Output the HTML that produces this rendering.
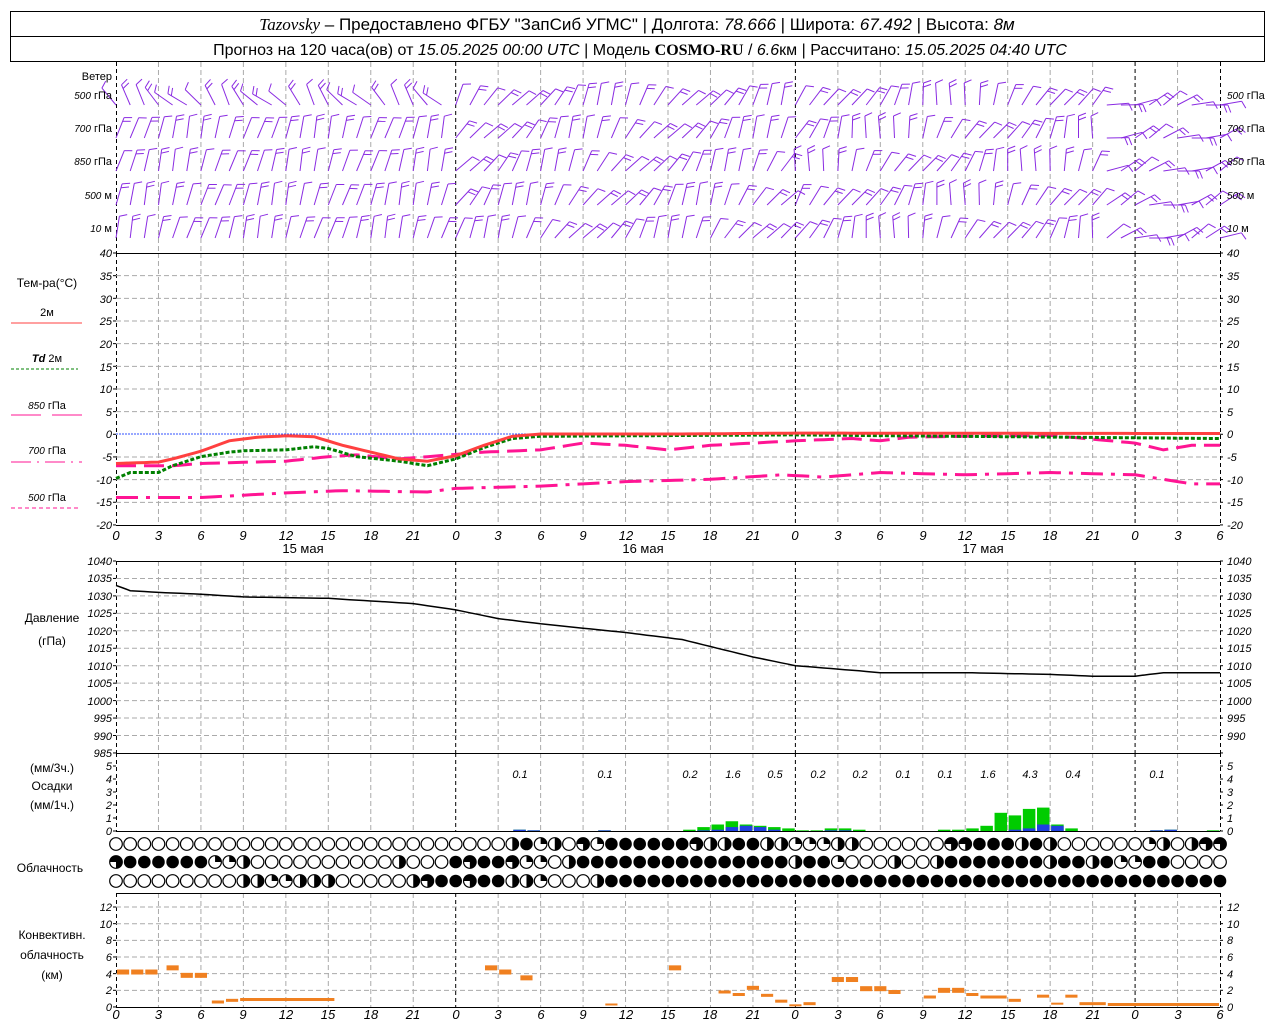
<!DOCTYPE html>
<html><head><meta charset="utf-8"><style>
body{margin:0;background:#fff}
svg{display:block}
text{font-family:"Liberation Sans",sans-serif;font-size:11px;fill:#000}
.n{font-style:italic;font-size:10px}
.l text{text-anchor:end}
.r text{text-anchor:start}
.ax text{text-anchor:middle;font-style:italic;font-size:13px}
.c{text-anchor:middle}
</style></head><body>
<svg id="s" width="1280" height="1024" viewBox="0 0 1280 1024" xmlns="http://www.w3.org/2000/svg">
<rect x="0" y="0" width="1280" height="1024" fill="#fff"/>
<g id="g"></g>
<rect x="10.5" y="11.5" width="1254" height="25" fill="none" stroke="#000"/>
<rect x="10.5" y="36.5" width="1254" height="25" fill="none" stroke="#000"/>
<text x="637" y="30" class="c" style="font-size:17px"><tspan font-style="italic" font-family="Liberation Serif">Tazovsky</tspan> – Предоставлено ФГБУ "ЗапСиб УГМС" | Долгота: <tspan font-style="italic">78.666</tspan> | Широта: <tspan font-style="italic">67.492</tspan> | Высота: <tspan font-style="italic">8м</tspan></text>
<text x="640" y="55" class="c" style="font-size:16px">Прогноз на 120 часа(ов) от <tspan font-style="italic">15.05.2025 00:00 UTC</tspan> | Модель <tspan font-weight="bold" font-family="Liberation Serif">COSMO-RU</tspan> / <tspan font-style="italic">6.6</tspan>км | Рассчитано: <tspan font-style="italic">15.05.2025 04:40 UTC</tspan></text>

<text x="112" y="80" text-anchor="end">Ветер</text>
<g class="l"><text x="112" y="99"><tspan class="n">500</tspan> гПа</text><text x="112" y="132"><tspan class="n">700</tspan> гПа</text><text x="112" y="165"><tspan class="n">850</tspan> гПа</text><text x="112" y="199"><tspan class="n">500</tspan> м</text><text x="112" y="232"><tspan class="n">10</tspan> м</text></g>
<g class="r"><text x="1227" y="99"><tspan class="n">500</tspan> гПа</text><text x="1227" y="132"><tspan class="n">700</tspan> гПа</text><text x="1227" y="165"><tspan class="n">850</tspan> гПа</text><text x="1227" y="199"><tspan class="n">500</tspan> м</text><text x="1227" y="232"><tspan class="n">10</tspan> м</text></g>

<text x="47" y="287" class="c" style="font-size:12px">Тем-ра(°C)</text>
<text x="47" y="316" class="c">2м</text>
<text x="47" y="362" class="c"><tspan font-style="italic" font-weight="bold">Td</tspan>  2м</text>
<text x="47" y="409" class="c"><tspan class="n">850</tspan> гПа</text>
<text x="47" y="454" class="c"><tspan class="n">700</tspan> гПа</text>
<text x="47" y="501" class="c"><tspan class="n">500</tspan> гПа</text>
<line x1="11" y1="323" x2="82" y2="323" stroke="#ff4040"/>
<line x1="11" y1="369" x2="78" y2="369" stroke="#008000" stroke-dasharray="3,2"/>
<line x1="11" y1="415" x2="41" y2="415" stroke="#ff1493"/><line x1="52" y1="415" x2="82" y2="415" stroke="#ff1493"/>
<line x1="11" y1="462" x2="82" y2="462" stroke="#ff1493" stroke-dasharray="20,6,2,6"/>
<line x1="11" y1="508" x2="78" y2="508" stroke="#ff1493" stroke-dasharray="4,3"/>

<g class="l n"><text x="112" y="257">40</text><text x="112" y="280">35</text><text x="112" y="303">30</text><text x="112" y="325">25</text><text x="112" y="348">20</text><text x="112" y="371">15</text><text x="112" y="393">10</text><text x="112" y="416">5</text><text x="112" y="438">0</text><text x="112" y="461">-5</text><text x="112" y="484">-10</text><text x="112" y="506">-15</text><text x="112" y="529">-20</text></g>
<g class="r n"><text x="1227" y="257">40</text><text x="1227" y="280">35</text><text x="1227" y="303">30</text><text x="1227" y="325">25</text><text x="1227" y="348">20</text><text x="1227" y="371">15</text><text x="1227" y="393">10</text><text x="1227" y="416">5</text><text x="1227" y="438">0</text><text x="1227" y="461">-5</text><text x="1227" y="484">-10</text><text x="1227" y="506">-15</text><text x="1227" y="529">-20</text></g>

<g class="ax"><text x="116" y="540">0</text><text x="158.5" y="540">3</text><text x="201" y="540">6</text><text x="243" y="540">9</text><text x="286" y="540">12</text><text x="328" y="540">15</text><text x="371" y="540">18</text><text x="413" y="540">21</text><text x="456" y="540">0</text><text x="498" y="540">3</text><text x="541" y="540">6</text><text x="583" y="540">9</text><text x="626" y="540">12</text><text x="668" y="540">15</text><text x="710" y="540">18</text><text x="753" y="540">21</text><text x="795" y="540">0</text><text x="838" y="540">3</text><text x="880" y="540">6</text><text x="923" y="540">9</text><text x="965" y="540">12</text><text x="1008" y="540">15</text><text x="1050" y="540">18</text><text x="1093" y="540">21</text><text x="1135" y="540">0</text><text x="1178" y="540">3</text><text x="1220" y="540">6</text></g>
<text x="303" y="553" class="c" style="font-size:13px">15 мая</text>
<text x="643" y="553" class="c" style="font-size:13px">16 мая</text>
<text x="983" y="553" class="c" style="font-size:13px">17 мая</text>

<text x="52" y="622" class="c" style="font-size:12px">Давление</text>
<text x="52" y="645" class="c" style="font-size:12px">(гПа)</text>
<g class="l n"><text x="112" y="565">1040</text><text x="112" y="582">1035</text><text x="112" y="600">1030</text><text x="112" y="617">1025</text><text x="112" y="635">1020</text><text x="112" y="652">1015</text><text x="112" y="670">1010</text><text x="112" y="687">1005</text><text x="112" y="705">1000</text><text x="112" y="722">995</text><text x="112" y="740">990</text><text x="112" y="757">985</text></g>
<g class="r n"><text x="1227" y="565">1040</text><text x="1227" y="582">1035</text><text x="1227" y="600">1030</text><text x="1227" y="617">1025</text><text x="1227" y="635">1020</text><text x="1227" y="652">1015</text><text x="1227" y="670">1010</text><text x="1227" y="687">1005</text><text x="1227" y="705">1000</text><text x="1227" y="722">995</text><text x="1227" y="740">990</text></g>

<text x="52" y="772" class="c" style="font-size:12px">(мм/3ч.)</text>
<text x="52" y="790" class="c" style="font-size:12px">Осадки</text>
<text x="52" y="809" class="c" style="font-size:12px">(мм/1ч.)</text>
<g class="l n"><text x="112" y="770">5</text><text x="112" y="783">4</text><text x="112" y="796">3</text><text x="112" y="809">2</text><text x="112" y="822">1</text><text x="112" y="835">0</text></g>
<g class="r n"><text x="1227" y="770">5</text><text x="1227" y="783">4</text><text x="1227" y="796">3</text><text x="1227" y="809">2</text><text x="1227" y="822">1</text><text x="1227" y="835">0</text></g>
<g class="c" style="font-style:italic;font-size:13px"><text x="520" y="778">0.1</text><text x="605" y="778">0.1</text><text x="690" y="778">0.2</text><text x="733" y="778">1.6</text><text x="775" y="778">0.5</text><text x="818" y="778">0.2</text><text x="860" y="778">0.2</text><text x="903" y="778">0.1</text><text x="945" y="778">0.1</text><text x="988" y="778">1.6</text><text x="1030" y="778">4.3</text><text x="1073" y="778">0.4</text><text x="1157" y="778">0.1</text></g>

<text x="50" y="872" class="c" style="font-size:12px">Облачность</text>

<text x="52" y="939" class="c" style="font-size:12px">Конвективн.</text>
<text x="52" y="959" class="c" style="font-size:12px">облачность</text>
<text x="52" y="979" class="c" style="font-size:12px">(км)</text>
<g class="l n"><text x="112" y="911">12</text><text x="112" y="928">10</text><text x="112" y="944">8</text><text x="112" y="961">6</text><text x="112" y="978">4</text><text x="112" y="994">2</text><text x="112" y="1011">0</text></g>
<g class="r n"><text x="1227" y="911">12</text><text x="1227" y="928">10</text><text x="1227" y="944">8</text><text x="1227" y="961">6</text><text x="1227" y="978">4</text><text x="1227" y="994">2</text><text x="1227" y="1011">0</text></g>
<g class="ax"><text x="116" y="1019">0</text><text x="158.5" y="1019">3</text><text x="201" y="1019">6</text><text x="243" y="1019">9</text><text x="286" y="1019">12</text><text x="328" y="1019">15</text><text x="371" y="1019">18</text><text x="413" y="1019">21</text><text x="456" y="1019">0</text><text x="498" y="1019">3</text><text x="541" y="1019">6</text><text x="583" y="1019">9</text><text x="626" y="1019">12</text><text x="668" y="1019">15</text><text x="710" y="1019">18</text><text x="753" y="1019">21</text><text x="795" y="1019">0</text><text x="838" y="1019">3</text><text x="880" y="1019">6</text><text x="923" y="1019">9</text><text x="965" y="1019">12</text><text x="1008" y="1019">15</text><text x="1050" y="1019">18</text><text x="1093" y="1019">21</text><text x="1135" y="1019">0</text><text x="1178" y="1019">3</text><text x="1220" y="1019">6</text></g>
</svg>
<script>
(function(){
var G=document.getElementById("g"),o="";
function X(h){return 116+h*14.154;}
function L(x1,y1,x2,y2,st){o+='<line x1="'+x1+'" y1="'+y1+'" x2="'+x2+'" y2="'+y2+'" '+st+'/>';}
var gray='stroke="#aaa" stroke-dasharray="5,3"',blk='stroke="#000" stroke-dasharray="4,3"';
var panels=[[62,253],[253,525],[561,753],[753,831],[893,1007]];
panels.forEach(function(p,i){
 for(var h=3;h<78;h+=3){ if(h%24==0) continue; L(X(h),p[0],X(h),p[1],gray);}
 [24,48,72].forEach(function(h){L(X(h),p[0],X(h),p[1],blk);});
 L(116.5,p[0],116.5,p[1],blk); L(1220.5,p[0],1220.5,p[1],blk);
});
for(var v=35;v>=-15;v-=5){var y=253+(40-v)*4.533; if(v!=0)L(116,y,1220,y,gray);}
L(116,434,1220,434,'stroke="#3050ff" stroke-dasharray="2,1"');
for(var p=1035;p>985;p-=5){var y=561+(1040-p)*3.49;L(116,y,1220,y,gray);}
for(var v=2;v<=12;v+=2){var y=1007-v*8.33;L(116,y,1220,y,gray);}
[253,525,561,753,831,893,1007].forEach(function(y){L(116,y+0.5,1220,y+0.5,'stroke="#000"');});
function ticks(y0,y1,step){for(var y=y0;y<=y1+0.1;y+=step){L(113,y,116,y,'stroke="#000"');L(1220,y,1223,y,'stroke="#000"');}}
ticks(253,525,22.66);ticks(561,753,17.45);ticks(766,831,13);ticks(907,1007,16.66);
function path(pts,fy,st){var d="";for(var h=0;h<=78;h+=0.5){var i=0;while(i<pts.length-2&&pts[i+1][0]<h)i++;var a=pts[i],b=pts[i+1];var t=(h-a[0])/(b[0]-a[0]);t=Math.max(0,Math.min(1,t));var v=a[1]+(b[1]-a[1])*t;d+=(d?"L":"M")+X(h).toFixed(1)+","+fy(v).toFixed(1);}o+='<path d="'+d+'" fill="none" '+st+'/>';}
var ty=function(v){return 434-v*4.533;};
path([[0,-14],[6,-14],[12,-13],[16,-12.5],[22,-12.8],[24,-12],[30,-11.5],[36,-10.5],[42,-10],[47,-9],[50,-9.5],[54,-8.5],[60,-9],[66,-8.5],[72,-9],[76,-11],[78,-11]],ty,'stroke="#ff1493" stroke-width="3" stroke-dasharray="22,8,4,8"');
path([[0,-7],[4,-7],[6,-6.5],[12,-6],[15,-5],[17,-4.6],[20,-5.5],[24,-4.5],[26,-4],[30,-3.5],[33,-2],[36,-2.5],[39,-3.5],[42,-2.5],[48,-1.5],[52,-1],[54,-1.5],[56,-0.7],[60,-0.5],[66,-0.3],[72,-2],[74,-3.5],[76,-2.5],[78,-2.5]],ty,'stroke="#ff1493" stroke-width="3" stroke-dasharray="20,8"');
path([[0,-9.8],[1,-8.5],[3,-8.5],[4,-7],[6,-5],[8,-4],[9,-3.7],[12,-3.5],[14,-2.8],[15,-3.2],[17,-5],[20,-6],[22,-7],[24,-5.5],[26,-3],[28,-1],[30,-0.5],[48,-0.2],[78,-1]],ty,'stroke="#008000" stroke-width="3" stroke-dasharray="4,2"');
path([[0,-6.5],[3,-6.2],[4,-5.5],[6,-3.8],[8,-1.5],[10,-0.7],[12,-0.4],[14,-0.6],[16,-2.5],[18,-4],[20,-5.5],[22,-6],[24,-4.8],[26,-2.5],[28,-0.5],[30,0],[40,0],[48,0.2],[78,0.1]],ty,'stroke="#ff4040" stroke-width="3"');
path([[0,1033],[1,1031.5],[3,1031],[6,1030.5],[9,1029.7],[15,1029.3],[21,1027.8],[24,1026],[27,1023.5],[30,1022],[36,1019.5],[40,1017.5],[45,1012.5],[48,1010],[52,1008.7],[54,1008],[60,1008],[66,1007.5],[69,1007],[72,1007],[74,1008],[78,1008]],function(p){return 561+(1040-p)*3.49;},'stroke="#000" stroke-width="1.5"');
var pr=[[28,0.1,0.1],[29,0.05,0.05],[34,0.05,0.05],[40,0.1,0],[41,0.3,0.05],[42,0.5,0.1],[43,0.75,0.3],[44,0.5,0.4],[45,0.4,0.3],[46,0.3,0.1],[47,0.2,0],[48,0.05,0],[49,0.05,0],[50,0.2,0.05],[51,0.2,0.05],[52,0.1,0],[58,0.1,0],[59,0.1,0],[60,0.2,0],[61,0.4,0],[62,1.4,0],[63,1.2,0.1],[64,1.7,0.2],[65,1.8,0.5],[66,0.5,0.4],[67,0.2,0],[73,0.05,0.05],[74,0.1,0.1],[77,0.05,0]];
pr.forEach(function(b){var x=X(b[0])+1,w=12.5;var hg=b[1]*13,hb=b[2]*13;o+='<rect x="'+x+'" y="'+(831-hg)+'" width="'+w+'" height="'+hg+'" fill="#00cc00"/>';if(hb>0)o+='<rect x="'+x+'" y="'+(831-hb)+'" width="'+w+'" height="'+hb+'" fill="#2040e0"/>';});
var cv=[[0,1,4.2,5],[1,2,4.2,5],[2,3,4.2,5],[3.5,4.5,4.7,5],[4.5,5.5,3.8,5],[5.5,6.5,3.8,5],[6.7,7.7,0.6,3],[7.7,8.7,0.8,3],[8.7,15.5,0.9,3],[26,27,4.7,5],[27,28,4.2,5],[28.5,29.5,3.5,5],[34.5,35.5,0.3,2],[39,40,4.7,5],[42.5,43.5,1.8,3],[43.5,44.5,1.5,3],[44.5,45.5,2.3,4],[45.5,46.5,1.4,3],[46.5,47.5,0.7,3],[47.5,48.5,0.2,2],[48.5,49.5,0.4,3],[50.5,51.5,3.3,5],[51.5,52.5,3.3,5],[52.5,53.5,2.2,5],[53.5,54.5,2.2,5],[54.5,55.5,1.8,4],[57,58,1.2,3],[58,59,2,5],[59,60,2,5],[60,61,1.5,3],[61,63,1.2,3],[63,64,0.8,3],[65,66,1.3,3],[66,67,0.4,2],[67,68,1.3,3],[68,70,0.4,3],[70,78,0.3,3]];
cv.forEach(function(c){var y=1007-c[2]*8.33;o+='<rect x="'+(X(c[0])+1)+'" y="'+(y-c[3]/2)+'" width="'+(X(c[1])-X(c[0])-2)+'" height="'+c[3]+'" fill="#f08020"/>';});
function rep(n,c){return Array(n+1).join(c);}
var r1=rep(28,"0")+"2412031444"+"4"+"4432244221112200000033444242000000120233";
var r2="3444444112"+rep(10,"0")+"2000"+"43443110244444"+"4444444444244100020024444444244241144"+"0000";
var r3=rep(9,"0")+"2211222"+"00000"+"234434422100024444"+rep(40,"4");
var rows=[[r1,844],[r2,862],[r3,881]];
rows.forEach(function(r){for(var i=0;i<=78;i++){var c=+(r[0][i]||0);var cx=X(i),cy=r[1],R=6.3;
 if(c==4){o+='<circle cx="'+cx+'" cy="'+cy+'" r="'+R+'" fill="#000"/>';continue;}
 o+='<circle cx="'+cx+'" cy="'+cy+'" r="'+R+'" fill="#fff" stroke="#000" stroke-width="1.2"/>';
 if(c==1)o+='<path d="M'+cx+','+cy+'V'+(cy-R)+'A'+R+','+R+' 0 0 1 '+(cx+R)+','+cy+'Z"/>';
 if(c==2)o+='<path d="M'+cx+','+(cy-R)+'A'+R+','+R+' 0 0 1 '+cx+','+(cy+R)+'Z"/>';
 if(c==3)o+='<path d="M'+cx+','+cy+'H'+(cx-R)+'A'+R+','+R+' 0 1 1 '+cx+','+(cy+R)+'Z"/>';
}});
var wy=[95,128,161,195,228];
for(var r=0;r<5;r++){for(var h=0;h<=78;h++){
 var x=X(h),y=wy[r];
 var ang=(h<24? (r==0? -40+Math.sin(h)*20 : 15+8*Math.sin(h*0.7+r)) : h<48? (30+20*Math.sin(h*0.5+r)) : (h<70? 20+25*Math.sin(h*0.4+r*2): 70+20*Math.sin(h+r)));
 var a=(ang-90)*Math.PI/180;var len=22;
 var sx=x,sy=y+10;var ey=sy+Math.sin(a)*len,ex=x+Math.cos(a)*len;
 o+='<line x1="'+sx.toFixed(1)+'" y1="'+sy.toFixed(1)+'" x2="'+ex.toFixed(1)+'" y2="'+ey.toFixed(1)+'" stroke="#8a2be2"/>';
 var nb=1+((h+r)%2);
 for(var k=0;k<nb;k++){var px=ex-Math.cos(a)*k*4,py=ey-Math.sin(a)*k*4;var b=a+1.2;
  o+='<line x1="'+px.toFixed(1)+'" y1="'+py.toFixed(1)+'" x2="'+(px+Math.cos(b)*8).toFixed(1)+'" y2="'+(py+Math.sin(b)*8).toFixed(1)+'" stroke="#8a2be2"/>';}
}}
G.innerHTML=o;
})();
</script>
</body></html>
